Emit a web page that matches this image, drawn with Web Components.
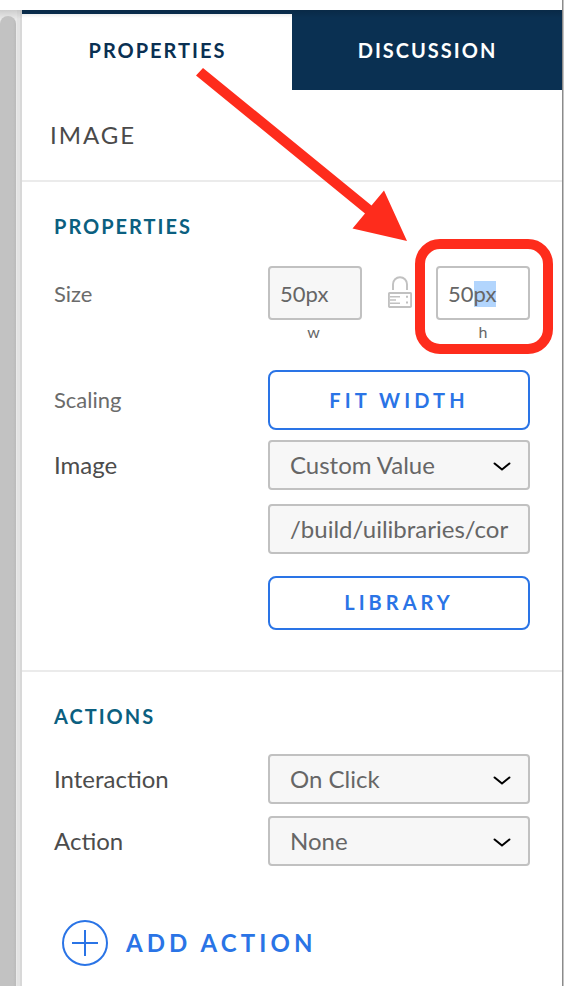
<!DOCTYPE html>
<html lang="en">
<head>
<meta charset="utf-8">
<title>Image properties</title>
<style>
html,body{margin:0;height:986px;overflow:hidden;background:#fff}
body{font-family:Lato,"Liberation Sans",sans-serif;color:#4a4a4a}
</style>
</head>
<body>
<editor-shell>
  <side-scrollbar slot="rail"></side-scrollbar>
  <tab-strip slot="tabs"><tab-item active>PROPERTIES</tab-item><tab-item>DISCUSSION</tab-item></tab-strip>
  <panel-title>IMAGE</panel-title>
  <panel-section style="--h:490px">
    <section-heading>PROPERTIES</section-heading>
    <property-row style="--rh:54px;--mt:12px;--lp:0" minor>
      <span slot="label">Size</span>
      <size-pair></size-pair>
    </property-row>
    <property-row style="--rh:60px;--mt:50px" minor><span slot="label">Scaling</span><outline-button style="--ls:4.1px">FIT WIDTH</outline-button></property-row>
    <property-row style="--rh:50px;--mt:10px"><span slot="label">Image</span><select-box>Custom Value</select-box></property-row>
    <property-row style="--rh:50px;--mt:14px"><text-box>/build/uilibraries/cor</text-box></property-row>
    <property-row style="--rh:54px;--mt:22px"><outline-button style="--ls:4px;--pb:2px">LIBRARY</outline-button></property-row>
  </panel-section>
  <panel-section last>
    <section-heading>ACTIONS</section-heading>
    <property-row style="--rh:50px;--mt:10px"><span slot="label">Interaction</span><select-box>On Click</select-box></property-row>
    <property-row style="--rh:50px;--mt:12px"><span slot="label">Action</span><select-box>None</select-box></property-row>
    <add-button>ADD ACTION</add-button>
  </panel-section>
  <callout-arrow slot="overlay"></callout-arrow>
</editor-shell>
<script>
const define = (name, html) => customElements.define(name, class extends HTMLElement {
  constructor() {
    super();
    this.attachShadow({ mode: 'open' }).innerHTML = html;
  }
});

define('editor-shell', `<style>
:host{display:grid;grid-template-columns:22px 540px 2px;grid-template-rows:10px 976px;position:relative;width:564px;height:986px;overflow:hidden}
.rail{grid-column:1;grid-row:2;display:flex}
.panel{grid-column:2;grid-row:2;background:#fff;position:relative;display:flex;flex-direction:column}
.panel::after{content:"";position:absolute;inset:0 0 auto;height:8px;background:linear-gradient(rgba(0,0,0,.14),transparent)}
.edge{grid-column:3;grid-row:1/3;background:linear-gradient(90deg,#8b8b8b 50%,#c4c4c4 50%)}
</style><div class="rail"><slot name="rail"></slot></div>
<div class="panel"><slot name="tabs"></slot><slot></slot></div><div class="edge"></div><slot name="overlay"></slot>`);

define('side-scrollbar', `<style>
:host{display:flex;width:22px;box-sizing:border-box;padding-top:6px;background:linear-gradient(rgba(0,0,0,.12),transparent 9px),linear-gradient(90deg,#e9e9e9 0 17px,#e3e3e3 17px 20px,#d8d8d8 20px)}
.thumb{width:16px;border-radius:8px 8px 0 0;background:linear-gradient(90deg,#c2c2c2 0 13px,#bababa)}
</style><div class="thumb"></div>`);

define('tab-strip', `<style>:host{display:flex;height:80px;background:#0a3052}</style><slot></slot>`);
define('tab-item', `<style>
:host{flex:1;display:flex;align-items:center;justify-content:center;font-size:20px;font-weight:700;letter-spacing:2px;color:#fff;box-sizing:border-box;padding-left:1px}
:host([active]){margin-top:4px;background:#fff;color:#0a3052;padding-bottom:4px}
</style><slot></slot>`);

define('panel-title', `<style>
:host{display:flex;align-items:center;height:92px;box-sizing:border-box;padding:0 0 2px 28px;border-bottom:2px solid #ebebeb;font-size:24px;letter-spacing:2px}
</style><slot></slot>`);

define('panel-section', `<style>
:host{display:flex;flex-direction:column;height:var(--h,auto);box-sizing:border-box;padding:32px 32px 0;border-bottom:2px solid #ebebeb}
:host([last]){border:0}
</style><slot></slot>`);
define('section-heading', `<style>
:host{display:flex;align-items:center;height:24px;margin-bottom:16px;font-size:20px;font-weight:700;letter-spacing:2px;color:#0b5f80}
</style><slot></slot>`);

define('property-row', `<style>
:host{display:grid;grid-template-columns:214px 262px;grid-template-rows:var(--rh);height:var(--rh);margin-top:var(--mt);font-size:24px;color:#4c4c4c}
:host([minor]){font-size:22px;color:#6b6b6b}
.label{display:flex;align-items:center;box-sizing:border-box;padding-bottom:var(--lp,2px)}
</style><div class="label"><slot name="label"></slot></div><slot></slot>`);

define('outline-button', `<style>
:host{display:flex;align-items:center;justify-content:center;box-sizing:border-box;padding-bottom:var(--pb,0);border:2px solid #2a74e6;border-radius:8px;color:#2a74e6;font-size:20px;font-weight:700;letter-spacing:var(--ls)}
</style><slot></slot>`);

const field = 'box-sizing:border-box;border:2px solid #c1c1c1;border-radius:4px;background:#f7f7f7;color:#666';
define('select-box', `<style>
:host{display:flex;align-items:center;justify-content:space-between;padding:0 17px 2px 20px;font-size:24px;${field}}
svg{display:block;margin-top:5px}
</style><slot></slot><svg width="18" height="12" viewBox="0 0 18 12"><path d="M1.6 2.5 9 8.6 16.4 2.5" fill="none" stroke="#000" stroke-width="2" stroke-linecap="round" stroke-linejoin="round"/></svg>`);
define('text-box', `<style>
:host{display:flex;align-items:center;padding:0 20px 2px;font-size:24px;white-space:nowrap;${field}}
</style><slot></slot>`);

define('size-field', `<style>
:host{display:flex;flex-direction:column;width:94px}
.box{display:flex;flex:none;align-items:center;height:54px;padding:0 0 0 10px;font-size:22px;${field}}
:host([focused]) .box{background:#fff}
.unit{display:flex;flex:none;justify-content:center;margin-top:2px;padding-right:3px;font-size:16px;line-height:20px;color:#666}
:host([focused]) .unit{padding-right:0}
</style><div class="box"><slot></slot></div><div class="unit"><slot name="unit"></slot></div>`);
define('lock-icon', `<style>:host{display:block;width:24px;height:32px;margin-top:10px}svg{display:block}</style>
<svg width="24" height="32" viewBox="0 0 24 32" fill="none" stroke="#c1c1c1"><path d="M5 14V8.2a7 7 0 0 1 14 0V14" stroke-width="1.9"/><rect x=".9" y="17" width="22.2" height="14" rx="1" stroke-width="1.9"/><path d="M2 20.8h10M2 24h6M2 27.2h10" stroke-width="1.6"/><path d="M18 20.8h2M18 26.6h2" stroke-width="2"/></svg>`);
define('size-pair', `<style>
:host{display:flex;justify-content:space-between}
mark{background:#b2d5fd;color:inherit;line-height:26px;display:inline-block}
lock-icon{margin-left:2px}
</style><size-field>50px<span slot="unit">w</span></size-field><lock-icon></lock-icon><size-field focused><span>50<mark>px</mark></span><span slot="unit">h</span></size-field>`);

define('add-button', `<style>
:host{display:flex;align-items:center;gap:18px;margin:54px 0 0 8px;height:46px;color:#2a74e6;font-size:24px;font-weight:700;letter-spacing:4.1px}
svg{display:block}
.text{padding-bottom:2px}
</style><svg width="46" height="46" viewBox="0 0 46 46" fill="none" stroke="#2a74e6" stroke-width="2"><circle cx="23" cy="23" r="22"/><path d="M23 10v26M10 23h26"/></svg><span class="text"><slot></slot></span>`);

define('callout-arrow', `<style>:host{position:absolute;inset:0;pointer-events:none}svg{display:block}</style>
<svg width="564" height="986" viewBox="0 0 564 986"><path d="M203 68 371.5 205.5 384 190.5 407 241 352.5 228.5 365 213.5 196 75.5Z" fill="#fe2c1c"/><rect x="420" y="244" width="128" height="105" rx="20" fill="none" stroke="#fe2c1c" stroke-width="10"/></svg>`);
</script>
</body>
</html>
